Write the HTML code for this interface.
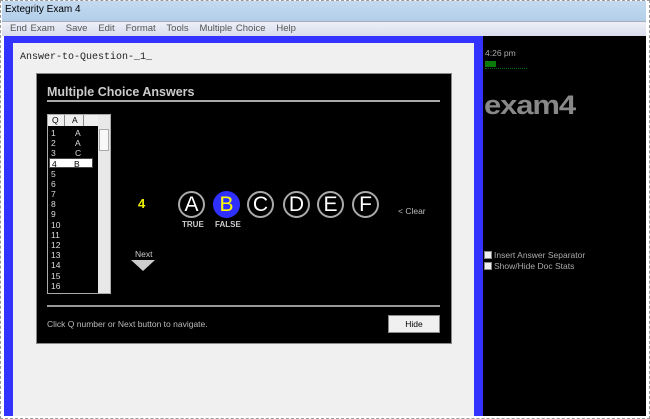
<!DOCTYPE html>
<html><head><style>
*{margin:0;padding:0;box-sizing:border-box}
body{width:650px;height:419px;position:relative;background:#fff;font-family:"Liberation Sans",sans-serif;overflow:hidden}
.a{position:absolute}
.circ{position:absolute;width:27px;height:27px;border-radius:50%;border:2px solid #aaa;color:#fff;font-size:21px;text-align:center;line-height:23px;top:191px}
.lb{position:absolute;font-size:8px;font-weight:bold;color:#ccc;top:220px}
.row{position:absolute;left:3px;font-size:8.5px;color:#ddd;width:42px;height:10px;line-height:10px}
.row span{position:absolute;left:24px}
</style></head><body>
<div class="a" style="left:0;top:0;width:650px;height:419px;border:1px dashed #999"></div>
<div class="a" style="left:2px;top:1px;width:644px;height:20px;background:linear-gradient(#c4daf0,#b2cfea)"></div>
<div class="a" style="left:5px;top:4px;font-size:10px;color:#000">Extegrity Exam 4</div>
<div class="a" style="left:2px;top:21px;width:644px;height:15px;background:linear-gradient(#eef0f8,#d8dcec);border-top:1px solid #aab"></div>
<div class="a" style="left:10px;top:23px;font-size:9.5px;color:#555;word-spacing:1px">End Exam&nbsp;&nbsp; Save&nbsp;&nbsp; Edit&nbsp;&nbsp; Format&nbsp;&nbsp; Tools&nbsp;&nbsp; Multiple Choice&nbsp;&nbsp; Help</div>
<div class="a" style="left:4px;top:36px;width:480px;height:380px;background:#3333ff"></div>
<div class="a" style="left:13px;top:43px;width:461px;height:373px;background:#f0f0f0"></div>
<div class="a" style="left:20px;top:52px;font-family:'Liberation Mono',monospace;font-size:10px;color:#222">Answer-to-Question-_1_</div>
<div class="a" style="left:483px;top:36px;width:163px;height:380px;background:#000"></div>
<div class="a" style="left:485px;top:48px;font-size:8.5px;color:#aaa">4:26 pm</div>
<div class="a" style="left:485px;top:61px;width:11px;height:6px;background:#0a7a0a"></div>
<div class="a" style="left:485px;top:68px;width:42px;height:1px;border-top:1px dotted #0a6a0a"></div>
<div class="a" style="left:484px;top:92px;font-size:27px;font-weight:bold;color:#888;letter-spacing:-1px;transform:scaleX(1.15);transform-origin:left;line-height:27px">exam4</div>
<div class="a" style="left:484px;top:251px;width:8px;height:8px;background:#eee;border:1px solid #888"></div>
<div class="a" style="left:494px;top:250px;font-size:8.5px;color:#aaa">Insert Answer Separator</div>
<div class="a" style="left:484px;top:262px;width:8px;height:8px;background:#eee;border:1px solid #888"></div>
<div class="a" style="left:494px;top:261px;font-size:8.5px;color:#aaa">Show/Hide Doc Stats</div>
<div class="a" style="left:36px;top:73px;width:416px;height:271px;background:#000;border:1px solid #888"></div>
<div class="a" style="left:47px;top:85px;font-size:12.5px;font-weight:bold;color:#ccc">Multiple Choice Answers</div>
<div class="a" style="left:47px;top:100px;width:393px;height:2px;background:#aaa"></div>
<div class="a" style="left:47px;top:114px;width:64px;height:180px;background:#000;border:1px solid #aaa">
 <div class="a" style="left:0;top:0;width:50px;height:11px;background:#eee;font-size:8.5px;color:#000;line-height:11px"><span style="position:absolute;left:4px">Q</span><span style="position:absolute;left:16px;top:0;width:1px;height:11px;background:#888"></span><span style="position:absolute;left:24px">A</span><span style="position:absolute;left:35px;top:0;width:1px;height:11px;background:#888"></span></div>
 <div class="a" style="left:50px;top:0;width:12px;height:178px;background:#e8e8e8"></div>
 <div class="a" style="left:51px;top:14px;width:10px;height:22px;background:#f8f8f8;border:1px solid #aaa"></div>
 <div class="row" style="top:13px">1<span>A</span></div>
 <div class="row" style="top:23px">2<span>A</span></div>
 <div class="row" style="top:33px">3<span>C</span></div>
 <div class="row" style="top:43px;background:#fff;color:#000;left:1px;padding-left:2px;width:44px;border:1px solid #444">4<span style="left:24px">B</span></div>
 <div class="row" style="top:54px">5</div><div class="row" style="top:64px">6</div><div class="row" style="top:74px">7</div><div class="row" style="top:84px">8</div><div class="row" style="top:94px">9</div><div class="row" style="top:105px">10</div><div class="row" style="top:115px">11</div><div class="row" style="top:125px">12</div><div class="row" style="top:135px">13</div><div class="row" style="top:145px">14</div><div class="row" style="top:156px">15</div><div class="row" style="top:166px">16</div>
</div>
<div class="a" style="left:138px;top:196px;font-size:13px;font-weight:bold;color:#ee0">4</div>
<div class="circ" style="left:178px">A</div>
<div class="circ" style="left:213px;background:#2f2fff;border-color:#2f2fff;color:#ff0">B</div>
<div class="circ" style="left:247px">C</div>
<div class="circ" style="left:283px">D</div>
<div class="circ" style="left:317px">E</div>
<div class="circ" style="left:352px">F</div>
<div class="lb" style="left:182px">TRUE</div>
<div class="lb" style="left:215px">FALSE</div>
<div class="a" style="left:398px;top:206px;font-size:8.5px;color:#bbb">&lt; Clear</div>
<div class="a" style="left:135px;top:249px;font-size:8.5px;color:#ccc">Next</div>
<div class="a" style="left:131px;top:260px;width:0;height:0;border-left:12px solid transparent;border-right:12px solid transparent;border-top:11px solid #ccc"></div>
<div class="a" style="left:47px;top:305px;width:393px;height:2px;background:#999"></div>
<div class="a" style="left:47px;top:319px;font-size:8.5px;color:#bbb">Click Q number or Next button to navigate.</div>
<div class="a" style="left:388px;top:315px;width:52px;height:18px;background:#f0f0f0;border:1px solid #888;font-size:8.5px;text-align:center;line-height:16px;color:#000">Hide</div>
</body></html>
